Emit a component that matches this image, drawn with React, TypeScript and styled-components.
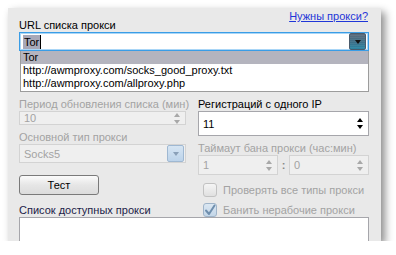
import React from 'react';
import styled, { createGlobalStyle, css } from 'styled-components';

const Global = createGlobalStyle`
  html, body { margin: 0; padding: 0; background: #fff; }
  body { font-family: "Liberation Sans", Arial, sans-serif; font-size: 11px; color: #000; }
  * { box-sizing: border-box; }
`;

const Page = styled.div`
  padding: 8px 0 0 8px;
`;

const Panel = styled.div`
  width: 373px;
  height: 233px;
  background: #e9e9e9;
  box-shadow: 4px 4px 8px rgba(0, 0, 0, 0.45);
  overflow: hidden;
  padding: 2px 12px 0 11px;
  display: flex;
  flex-direction: column;
`;

const Header = styled.div`
  display: flex;
  justify-content: space-between;
  align-items: flex-start;
  height: 22px;
`;

const Label = styled.div<{ $disabled?: boolean; $tone?: 'navy' }>`
  line-height: 13px;
  height: 13px;
  white-space: nowrap;
  color: ${p => (p.$disabled ? '#a3a3a3' : p.$tone === 'navy' ? '#1c1c48' : '#000')};
`;

const HeaderLabel = styled(Label)`
  margin-top: 9px;
`;

const Link = styled.a`
  line-height: 13px;
  color: #1f36d8;
  text-decoration: underline;
  margin-right: 1px;
  cursor: pointer;
`;

const Combo = styled.div`
  position: relative;
  height: 20px;
  background: #fff;
  border: 1px solid #3a9de6;
  box-shadow: inset 0 0 0 1px #a9d6f7;
  display: flex;
  align-items: center;
  padding: 0 2px 0 3px;
`;

const Selected = styled.span`
  background: #a8a8b8;
  line-height: 14px;
  padding: 0 1px;
`;

const Caret = styled.span`
  display: inline-block;
  width: 1px;
  height: 14px;
  background: #000;
`;

const DropButton = styled.div<{ $disabled?: boolean }>`
  margin-left: auto;
  width: 17px;
  height: 17px;
  border-radius: 2px;
  display: flex;
  align-items: center;
  justify-content: center;
  ${p =>
    p.$disabled
      ? css`
          background: linear-gradient(#d6e5f3, #bcd3ea);
          border: 1px solid #9fb8d2;
        `
      : css`
          background: repeating-linear-gradient(#0000 0 1px, rgba(255,255,255,0.06) 1px 2px),
            linear-gradient(#5d6a7a, #3b6f88 55%, #2a86a4);
          border: 1px solid #4a5b6c;
        `}
`;

const Arrow = styled.div<{ $color: string; $dir?: 'up' | 'down' }>`
  width: 0;
  height: 0;
  border-left: 3.5px solid transparent;
  border-right: 3.5px solid transparent;
  ${p =>
    p.$dir === 'up'
      ? css`border-bottom: 4px solid ${p.$color};`
      : css`border-top: 4px solid ${p.$color};`}
`;

const DropList = styled.div`
  background: #fff;
  border: 1px solid #9c9c9c;
  border-top: none;
  padding-bottom: 1px;
  margin-left: 1px;
`;

const DropItem = styled.div<{ $active?: boolean }>`
  height: 13px;
  line-height: 13px;
  padding-left: 2px;
  white-space: nowrap;
  background: ${p => (p.$active ? '#b4b4be' : 'transparent')};
`;

const Grid = styled.div`
  display: grid;
  grid-template-columns: 167px 1fr;
  column-gap: 12px;
  margin-top: 6px;
`;

const Column = styled.div`
  display: flex;
  flex-direction: column;
`;

const Field = styled.div<{ $disabled?: boolean }>`
  height: 20px;
  display: flex;
  align-items: center;
  padding: 0 5px 0 4px;
  margin-bottom: 6px;
  flex: 1;
  background: ${p => (p.$disabled ? '#efefef' : '#fff')};
  border: 1px solid ${p => (p.$disabled ? '#d3d3d3' : '#a6a6ab')};
  color: ${p => (p.$disabled ? '#a3a3a3' : '#000')};
`;

const ComboField = styled(Field)`
  padding-right: 1px;
`;

const Spin = styled.div`
  margin-left: auto;
  display: flex;
  flex-direction: column;
  gap: 3px;
  align-items: center;
`;

const Pair = styled.div`
  display: flex;
  align-items: flex-start;
`;

const Colon = styled.div`
  width: 11px;
  text-align: center;
  line-height: 20px;
  font-weight: bold;
  color: #8a8a8a;
`;

const Button = styled.button`
  width: 80px;
  height: 20px;
  margin-top: 6px;
  border: 1px solid #7a7a7a;
  border-radius: 3px;
  background: linear-gradient(#fbfbfb, #e6e6e6 50%, #dcdcdc);
  font: inherit;
  color: #000;
  padding: 0;
`;

const ListLabel = styled(Label)`
  margin-top: 9px;
`;

const CheckRow = styled.div<{ $first?: boolean }>`
  display: flex;
  align-items: center;
  gap: 6px;
  margin-left: 5px;
  height: 14px;
  white-space: nowrap;
  margin-top: ${p => (p.$first ? '2px' : '6px')};
  color: #a3a3a3;
`;

const Box = styled.div<{ $checked?: boolean }>`
  width: 14px;
  height: 14px;
  border-radius: 3px;
  border: 1px solid ${p => (p.$checked ? '#9fb4c9' : '#c2c2c2')};
  background: ${p => (p.$checked ? 'linear-gradient(#dbe7f2, #c3d6e8)' : 'linear-gradient(#f5f5f5, #e0e0e0)')};
  display: flex;
  align-items: center;
  justify-content: center;
`;

const ListBox = styled.div`
  height: 40px;
  background: #fff;
  border: 1px solid #a6a6ab;
  flex-shrink: 0;
`;

const Spinner: React.FC<{ value: string; disabled?: boolean }> = ({ value, disabled }) => {
  const c = disabled ? '#a8a8a8' : '#000';
  return (
    <Field $disabled={disabled}>
      {value}
      <Spin>
        <Arrow $dir="up" $color={c} />
        <Arrow $dir="down" $color={c} />
      </Spin>
    </Field>
  );
};

export default function App() {
  return (
    <>
      <Global />
      <Page>
        <Panel>
          <Header>
            <HeaderLabel>URL списка прокси</HeaderLabel>
            <Link>Нужны прокси?</Link>
          </Header>
          <Combo>
            <Selected>Tor</Selected>
            <Caret />
            <DropButton>
              <Arrow $color="#111" />
            </DropButton>
          </Combo>
          <DropList>
            <DropItem $active>Tor</DropItem>
            <DropItem>http://awmproxy.com/socks_good_proxy.txt</DropItem>
            <DropItem>http://awmproxy.com/allproxy.php</DropItem>
          </DropList>
          <Grid>
            <Column>
              <Label $disabled>Период обновления списка (мин)</Label>
              <Spinner value="10" disabled />
              <Label $disabled>Основной тип прокси</Label>
              <ComboField $disabled>
                Socks5
                <DropButton $disabled>
                  <Arrow $color="#8aa0b8" />
                </DropButton>
              </ComboField>
              <Button>Тест</Button>
              <ListLabel $tone="navy">Список доступных прокси</ListLabel>
            </Column>
            <Column>
              <Label>Регистраций с одного IP</Label>
              <Spinner value="11" />
              <Label $disabled>Таймаут бана прокси (час:мин)</Label>
              <Pair>
                <Spinner value="1" disabled />
                <Colon>:</Colon>
                <Spinner value="0" disabled />
              </Pair>
              <CheckRow $first>
                <Box />
                Проверять все типы прокси
              </CheckRow>
              <CheckRow>
                <Box $checked>
                  <svg width="12" height="12" viewBox="0 0 12 12">
                    <path d="M2 6.5 L5 10 L10.5 1.5" fill="none" stroke="#6f8fae" strokeWidth="2" strokeLinecap="round" strokeLinejoin="round" />
                  </svg>
                </Box>
                Банить нерабочие прокси
              </CheckRow>
            </Column>
          </Grid>
          <ListBox />
        </Panel>
      </Page>
    </>
  );
}
